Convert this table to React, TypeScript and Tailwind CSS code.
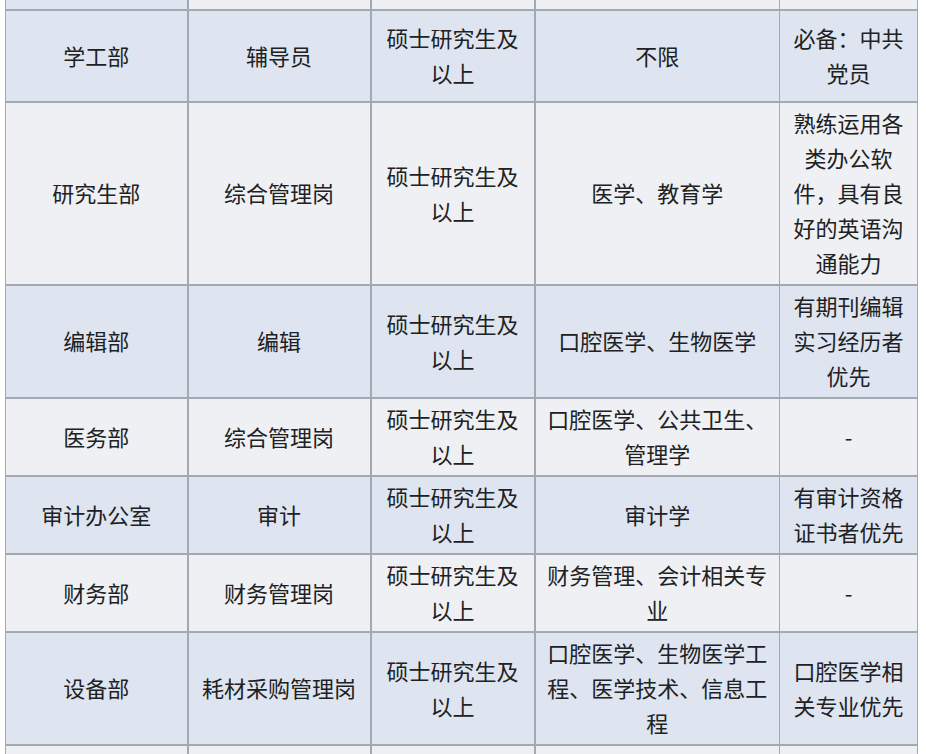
const BLUE = "bg-[#dee5f1]";
const GRAY = "bg-[#eff0f3]";

type Row = { cells: string[]; bg: string; h?: string };

const rows: Row[] = [
  { cells: ["学工部", "辅导员", "硕士研究生及以上", "不限", "必备：中共党员"], bg: BLUE, h: "h-[92px]" },
  { cells: ["研究生部", "综合管理岗", "硕士研究生及以上", "医学、教育学", "熟练运用各类办公软件，具有良好的英语沟通能力"], bg: GRAY },
  { cells: ["编辑部", "编辑", "硕士研究生及以上", "口腔医学、生物医学", "有期刊编辑实习经历者优先"], bg: BLUE },
  { cells: ["医务部", "综合管理岗", "硕士研究生及以上", "口腔医学、公共卫生、管理学", "-"], bg: GRAY },
  { cells: ["审计办公室", "审计", "硕士研究生及以上", "审计学", "有审计资格证书者优先"], bg: BLUE },
  { cells: ["财务部", "财务管理岗", "硕士研究生及以上", "财务管理、会计相关专业", "-"], bg: GRAY },
  { cells: ["设备部", "耗材采购管理岗", "硕士研究生及以上", "口腔医学、生物医学工程、医学技术、信息工程", "口腔医学相关专业优先"], bg: BLUE },
];

const colBorder = ["border-l", "border-l-2", "border-l-2", "border-l-2", "border-l"];

const App = () => {
  return (
    <div
      className="min-h-screen bg-white text-[#202122]"
      style={{ fontFamily: '"Noto Sans CJK SC", "Noto Sans", sans-serif' }}
    >
      <table className="ml-[5px] w-[912px] table-fixed border-collapse text-[22px] leading-[35px]">
        <colgroup>
          <col className="w-[182px]" />
          <col className="w-[183px]" />
          <col className="w-[164px]" />
          <col className="w-[245px]" />
          <col className="w-[138px]" />
        </colgroup>
        <tbody>
          {/* row cut off at the top of the picture */}
          <tr className="h-[10px]">
            <td className={`${BLUE} border-l border-r-2 border-b-2 border-[#a2a9b1]`} />
            <td className={`${GRAY} border-r-2 border-b-2 border-[#a2a9b1]`} />
            <td className={`${GRAY} border-r-2 border-b-2 border-[#a2a9b1]`} />
            <td className={`${GRAY} border-r border-b-2 border-[#a2a9b1]`} />
            <td className={`${GRAY} border-r border-b-2 border-[#a2a9b1]`} />
          </tr>
          {rows.map((row, i) => (
            <tr key={i} className={row.h}>
              {row.cells.map((c, j) => (
                <td
                  key={j}
                  className={`${row.bg} ${colBorder[j]} ${j === 4 ? "border-r" : ""} border-b-2 border-[#a2a9b1] px-2 pt-[2px] pb-[4px] text-center align-middle`}
                >
                  {c}
                </td>
              ))}
            </tr>
          ))}
          <tr className="h-[40px]">
            {colBorder.map((b, j) => (
              <td key={j} className={`${GRAY} ${b} ${j === 4 ? "border-r" : ""} border-b-2 border-[#a2a9b1]`} />
            ))}
          </tr>
        </tbody>
      </table>
    </div>
  );
};

export default App;
